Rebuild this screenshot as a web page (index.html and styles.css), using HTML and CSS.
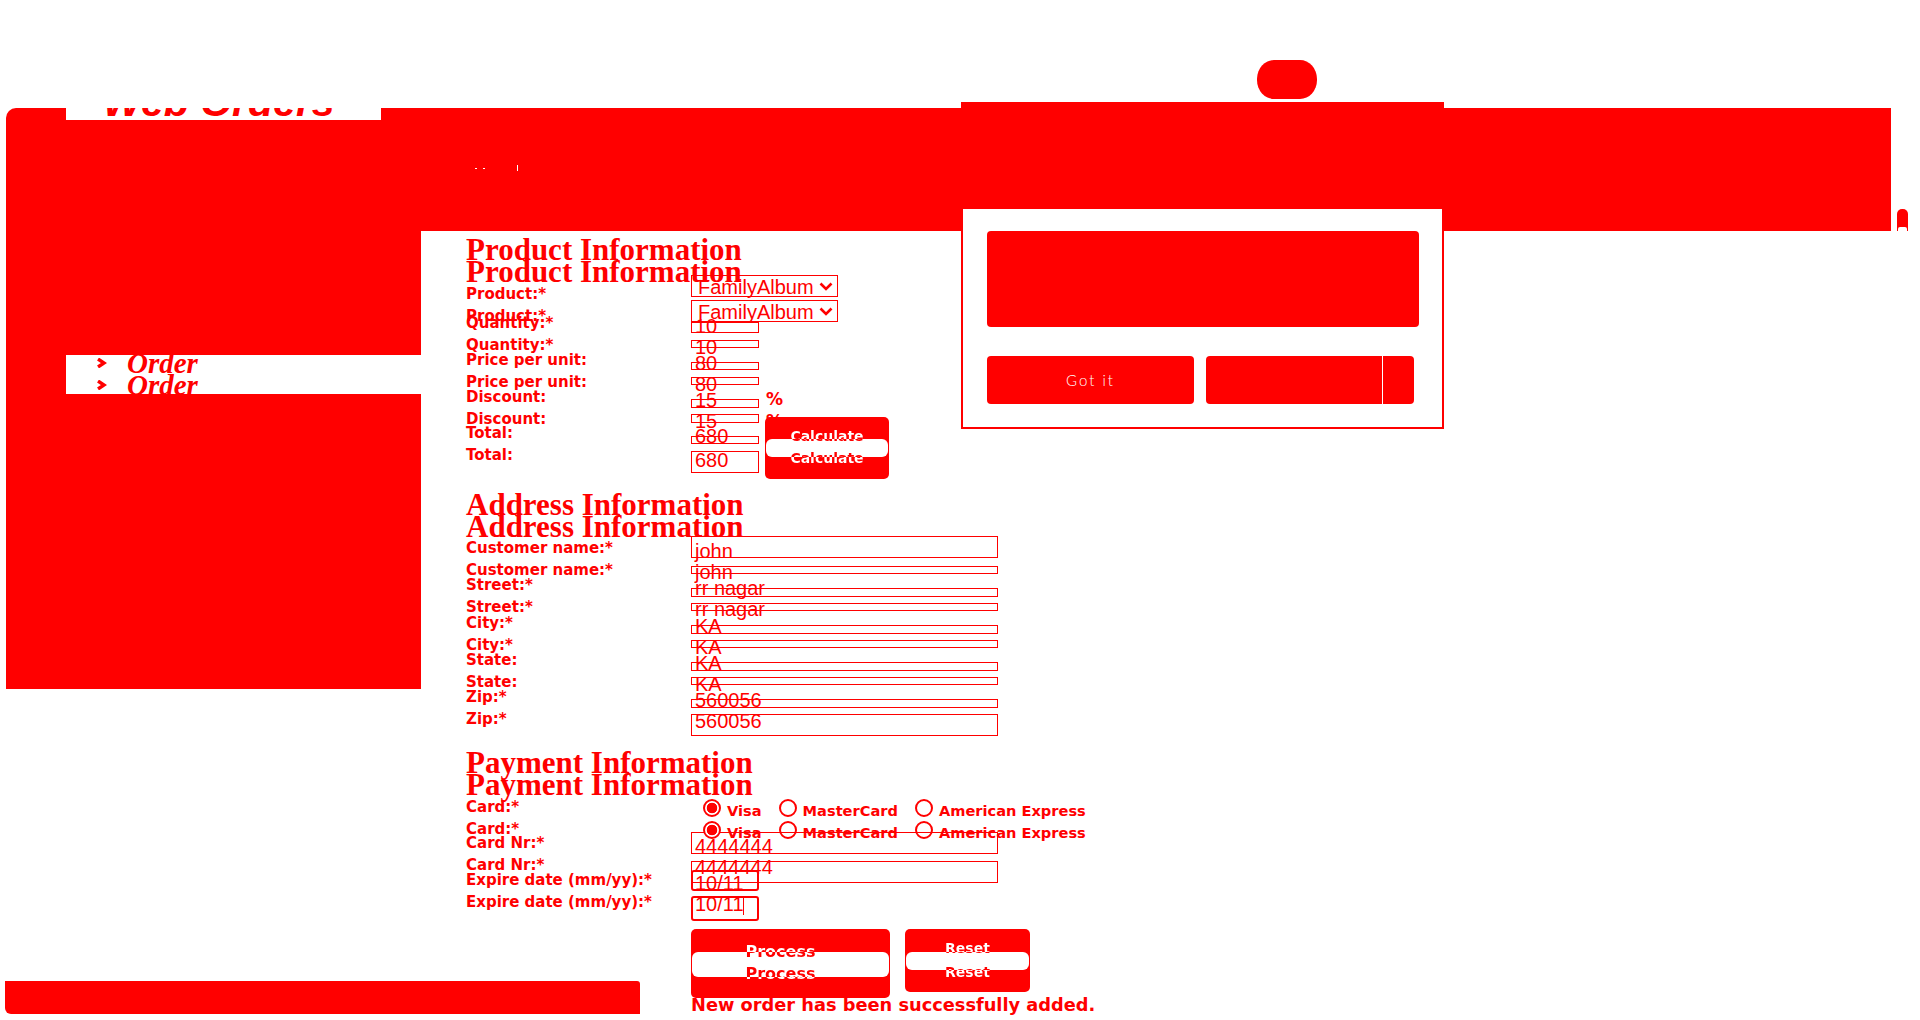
FILE: index.html
```html
<!DOCTYPE html>
<html lang="en">
<head>
<meta charset="utf-8">
<title>Web Orders</title>
<link rel="stylesheet" href="styles.css">
</head>
<body>
<div class="page">
  <div class="oval"></div>

  <div class="bandrow">
    <header class="topband">
      <div class="brand"><span class="brand-text">Web Orders</span></div>
      <div class="marks"><i class="m1"></i><i class="m2"></i><i class="m3"></i></div>
    </header>
    <div class="arch"></div>
  </div>

  <div class="layout">
    <aside class="left">
      <div class="side">
        <nav class="navband">
          <div class="navlines">
            <div class="navline"><svg class="chev" viewBox="0 0 11 10"><polyline points="2,1 8,5 2,9" fill="none" stroke="currentColor" stroke-width="3.4"/></svg>Order</div>
            <div class="navline"><svg class="chev" viewBox="0 0 11 10"><polyline points="2,1 8,5 2,9" fill="none" stroke="currentColor" stroke-width="3.4"/></svg>Order</div>
          </div>
        </nav>
      </div>
      <div class="footbar"></div>
    </aside>

    <main class="content">
      <!-- first copy -->
      <div class="form a">
        <section class="sec sec1">
          <h2>Product Information</h2>
          <div class="rows">
            <div class="row h29"><span class="lbl">Product:*</span><div class="fld"><div class="inp sel f-sel"><span class="box">FamilyAlbum<svg class="caret" viewBox="0 0 14 9"><polyline points="1.5,1.5 7,7 12.5,1.5" fill="none" stroke="currentColor" stroke-width="2.6"/></svg></span></div></div></div>
            <div class="row"><span class="lbl">Quantity:*</span><div class="fld"><div class="inp s f-qty"><span class="box"></span><span class="val">10</span></div></div></div>
            <div class="row"><span class="lbl">Price per unit:</span><div class="fld"><div class="inp s f-price"><span class="box"></span><span class="val">80</span></div></div></div>
            <div class="row h36"><span class="lbl">Discount:</span><div class="fld"><div class="inp s f-disc"><span class="box"></span><span class="val">15</span></div><span class="pct">%</span></div></div>
            <div class="row"><span class="lbl">Total:</span><div class="fld"><div class="inp s f-total"><span class="box"></span><span class="val">680</span></div>
              <div class="ubtn calc"><span class="ov"></span><span class="ut t1">Calculate</span><span class="ut t2">Calculate</span></div></div></div>
          </div>
        </section>
        <section class="sec sec2">
          <h2>Address Information</h2>
          <div class="rows">
            <div class="row"><span class="lbl">Customer name:*</span><div class="fld"><div class="inp w f-cust"><span class="box"></span><span class="val">john</span></div></div></div>
            <div class="row h38"><span class="lbl">Street:*</span><div class="fld"><div class="inp w f-street"><span class="box"></span><span class="val">rr nagar</span></div></div></div>
            <div class="row"><span class="lbl">City:*</span><div class="fld"><div class="inp w f-city"><span class="box"></span><span class="val">KA</span></div></div></div>
            <div class="row"><span class="lbl">State:</span><div class="fld"><div class="inp w f-state"><span class="box"></span><span class="val">KA</span></div></div></div>
            <div class="row"><span class="lbl">Zip:*</span><div class="fld"><div class="inp w f-zip"><span class="box"></span><span class="val">560056</span></div></div></div>
          </div>
        </section>
        <section class="sec sec3">
          <h2>Payment Information</h2>
          <div class="rows">
            <div class="row h36"><span class="lbl">Card:*</span><div class="fld radios">
              <span class="radio"><i class="dot on"></i><span class="rt">Visa</span></span>
              <span class="radio"><i class="dot"></i><span class="rt">MasterCard</span></span>
              <span class="radio"><i class="dot"></i><span class="rt">American Express</span></span></div></div>
            <div class="row"><span class="lbl">Card Nr:*</span><div class="fld"><div class="inp w f-card"><span class="box"></span><span class="val">4444444</span></div></div></div>
            <div class="row h57"><span class="lbl">Expire date (mm/yy):*</span><div class="fld"><div class="inp s f-exp"><span class="box"></span><span class="val">10/11</span><span class="cursor"></span></div></div></div>
          </div>
          <div class="btnrow">
            <div class="ubtn proc"><span class="ov"></span><span class="ut t1">Process</span><span class="ut t2">Process</span></div>
            <div class="ubtn rst"><span class="ov"></span><span class="ut t1">Reset</span><span class="ut t2">Reset</span></div>
          </div>
          <p class="msg">New order has been successfully added.</p>
        </section>
      </div>

      <!-- second copy, 22px lower -->
      <div class="form b">
        <section class="sec sec1">
          <h2>Product Information</h2>
          <div class="rows">
            <div class="row h29"><span class="lbl">Product:*</span><div class="fld"><div class="inp sel f-sel"><span class="box">FamilyAlbum<svg class="caret" viewBox="0 0 14 9"><polyline points="1.5,1.5 7,7 12.5,1.5" fill="none" stroke="currentColor" stroke-width="2.6"/></svg></span></div></div></div>
            <div class="row"><span class="lbl">Quantity:*</span><div class="fld"><div class="inp s f-qty"><span class="box"></span><span class="val">10</span></div></div></div>
            <div class="row"><span class="lbl">Price per unit:</span><div class="fld"><div class="inp s f-price"><span class="box"></span><span class="val">80</span></div></div></div>
            <div class="row h36"><span class="lbl">Discount:</span><div class="fld"><div class="inp s f-disc"><span class="box"></span><span class="val">15</span></div><span class="pct">%</span></div></div>
            <div class="row"><span class="lbl">Total:</span><div class="fld"><div class="inp s f-total"><span class="box"></span><span class="val">680</span></div></div></div>
          </div>
        </section>
        <section class="sec sec2">
          <h2>Address Information</h2>
          <div class="rows">
            <div class="row"><span class="lbl">Customer name:*</span><div class="fld"><div class="inp w f-cust"><span class="box"></span><span class="val">john</span></div></div></div>
            <div class="row h38"><span class="lbl">Street:*</span><div class="fld"><div class="inp w f-street"><span class="box"></span><span class="val">rr nagar</span></div></div></div>
            <div class="row"><span class="lbl">City:*</span><div class="fld"><div class="inp w f-city"><span class="box"></span><span class="val">KA</span></div></div></div>
            <div class="row"><span class="lbl">State:</span><div class="fld"><div class="inp w f-state"><span class="box"></span><span class="val">KA</span></div></div></div>
            <div class="row"><span class="lbl">Zip:*</span><div class="fld"><div class="inp w f-zip"><span class="box"></span><span class="val">560056</span></div></div></div>
          </div>
        </section>
        <section class="sec sec3">
          <h2>Payment Information</h2>
          <div class="rows">
            <div class="row h36"><span class="lbl">Card:*</span><div class="fld radios">
              <span class="radio"><i class="dot on"></i><span class="rt">Visa</span></span>
              <span class="radio"><i class="dot"></i><span class="rt">MasterCard</span></span>
              <span class="radio"><i class="dot"></i><span class="rt">American Express</span></span></div></div>
            <div class="row"><span class="lbl">Card Nr:*</span><div class="fld"><div class="inp w f-card"><span class="box"></span><span class="val">4444444</span></div></div></div>
            <div class="row h57"><span class="lbl">Expire date (mm/yy):*</span><div class="fld"><div class="inp s f-exp"><span class="box"></span><span class="val">10/11</span><span class="cursor"></span></div></div></div>
          </div>
        </section>
      </div>
    </main>
  </div>

  <div class="modal">
    <div class="mhead"></div>
    <div class="mbody">
      <div class="notice"></div>
      <div class="mbtns">
        <div class="mbtn got">Got it</div>
        <div class="mbtn split"><span></span></div>
      </div>
    </div>
  </div>
</div>
</body>
</html>
```

FILE: styles.css
```css
:root { --r: #ff0000; }
* { box-sizing: border-box; }
html, body { margin: 0; background: #fff; }
body { font-family: "DejaVu Sans", sans-serif; color: var(--r); }

.page { position: relative; width: 1920px; height: 1020px; overflow: hidden; padding-top: 108px; }

.oval { position: absolute; left: 1257px; top: 60px; width: 60px; height: 39px; background: var(--r); border-radius: 17px / 19px; }

/* top band */
.bandrow { display: flex; align-items: flex-end; height: 123px; }
.topband { margin-left: 6px; width: 1885px; height: 123px; flex: none; background: var(--r); border-top-left-radius: 10px; display: flex; align-items: flex-start; }
.brand { margin-left: 60px; width: 315px; height: 12px; background: #fff; overflow: hidden; flex: none; }
.brand-text { display: block; margin: -26px 0 0 37px; font: italic bold 41px/41px "Liberation Sans", sans-serif; white-space: nowrap; }
.marks { margin: 57px 0 0 94px; display: flex; align-items: flex-start; }
.marks i { display: block; background: #fff; }
.m1 { width: 2px; height: 1px; margin-top: 3px; }
.m2 { width: 2px; height: 1px; margin: 3px 0 0 6px; }
.m3 { width: 1px; height: 6px; margin-left: 32px; }
.arch { margin-left: 6px; width: 11px; height: 22px; flex: none; background: var(--r); border-radius: 5px 5px 0 0; position: relative; }
.arch::after { content: ""; position: absolute; left: 1px; right: 1px; bottom: 0; height: 4px; background: #fff; border-radius: 2px 2px 0 0; }

/* body layout */
.layout { display: flex; align-items: flex-start; }
.left { width: 421px; flex: none; padding-left: 6px; }
.side { height: 458px; background: var(--r); padding-top: 124px; }
.navband { margin-left: 60px; height: 39px; background: #fff; overflow: hidden; }
.navlines { margin-top: -3px; }
.navline { height: 22px; padding-left: 30px; font: italic bold 29px/22px "Liberation Serif", serif; white-space: nowrap; }
.chev { width: 11px; height: 10px; vertical-align: 5px; margin-right: 20px; }
.footbar { margin: 292px 0 0 -1px; width: 635px; height: 33px; background: var(--r); border-radius: 0 3px 0 6px; }

.content { position: relative; margin-left: 45px; width: 700px; flex: none; }
.form.b { position: absolute; left: 0; top: 22px; width: 100%; }

h2 { margin: 0; font: bold 31px/30px "Liberation Serif", serif; white-space: nowrap; }
.sec1 { padding-top: 4px; }
.rows { margin-top: 21px; }
.sec2 { margin-top: 28px; }
.sec2 .rows { margin-top: 20px; }
.sec3 { margin-top: 22px; }

.row { display: grid; grid-template-columns: 225px 1fr; height: 37px; }
.h29 { height: 29px; }
.h36 { height: 36px; }
.h38 { height: 38px; }
.h57 { height: 57px; }
.lbl { font: bold 15px/17px "DejaVu Sans", sans-serif; white-space: nowrap; }
.fld { display: flex; align-items: flex-start; }

.inp { position: relative; height: 22px; flex: none; }
.s { width: 68px; }
.w { width: 307px; }
.sel { width: 147px; }
.box { position: absolute; left: 0; right: 0; border: 1px solid var(--r); }
.val { position: absolute; left: 4px; top: 1px; font: 20px/20px "Liberation Sans", sans-serif; white-space: nowrap; }
.b .val { top: 0; }
.sel .box { height: 22px; display: flex; align-items: center; justify-content: space-between; padding: 1px 4px 0 6px; font: 20px/20px "Liberation Sans", sans-serif; white-space: nowrap; }
.caret { width: 14px; height: 9px; }

.a .f-sel .box { top: -11px; }
.b .f-sel .box { top: -8px; }
.a .f-qty .box { top: 7px; height: 11px; }
.b .f-qty .box { top: 3px; height: 8px; }
.a .f-price .box { top: 10px; height: 8px; }
.b .f-price .box { top: 3px; height: 8px; }
.a .f-disc .box { top: 10px; height: 9px; }
.b .f-disc .box { top: 3px; height: 9px; }
.a .f-total .box { top: 11px; height: 8px; }
.b .f-total .box { top: 4px; height: 22px; }
.b .f-total .val { top: 3px; }
.a .f-cust .box { top: -4px; height: 22px; }
.b .f-cust .box { top: 4px; height: 8px; }
.a .f-street .box { top: 11px; height: 9px; }
.b .f-street .box { top: 4px; height: 8px; }
.a .f-city .box, .a .f-state .box, .a .f-zip .box { top: 10px; height: 9px; }
.b .f-city .box, .b .f-state .box { top: 3px; height: 8px; }
.b .f-zip .box { top: 3px; height: 22px; }
.a .f-card .box { top: -3px; height: 22px; }
.b .f-card .box { top: 4px; height: 22px; }
.f-exp .box { border-width: 2px; border-radius: 3px; }
.a .f-exp .box { top: -2px; height: 21px; }
.b .f-exp .box { top: 2px; height: 25px; }
.cursor { position: absolute; left: 52px; top: 4px; width: 1px; height: 17px; background: var(--r); }
.a .cursor { display: none; }

.pct { margin: 2px 0 0 7px; font: bold 17px/17px "DejaVu Sans", sans-serif; }

.radios { padding-left: 12px; gap: 17px; }
.radio { display: flex; gap: 6px; align-items: flex-start; }
.dot { display: block; width: 18px; height: 18px; border: 2px solid var(--r); border-radius: 50%; flex: none; }
.dot.on { background: radial-gradient(circle, var(--r) 0 5px, #fff 5.6px); }
.rt { margin-top: 3px; font: bold 14.6px/17px "DejaVu Sans", sans-serif; white-space: nowrap; }

/* merged button pairs */
.ubtn { position: relative; flex: none; background: var(--r); border-radius: 5px; overflow: hidden; }
.ov { position: absolute; left: 1px; right: 1px; background: #fff; border-radius: 6px; }
.ut { position: absolute; left: 0; right: 0; text-align: center; font: bold 14px/14px "DejaVu Sans", sans-serif; white-space: nowrap; color: transparent; -webkit-background-clip: text; background-clip: text; }
.calc { width: 124px; height: 62px; margin: -8px 0 0 6px; }
.calc .ov { top: 22px; height: 18px; }
.calc .t1 { top: 12px; background-image: linear-gradient(#fff 10px, var(--r) 10px); }
.calc .t2 { top: 34px; background-image: linear-gradient(var(--r) 6px, #fff 6px); }

.btnrow { display: flex; gap: 15px; margin-left: 225px; height: 66px; align-items: flex-start; }
.proc { width: 199px; height: 69px; }
.proc .ov { top: 23px; height: 25px; }
.proc .ut { font-size: 16px; line-height: 16px; padding-right: 20px; }
.proc .t1 { top: 15px; background-image: linear-gradient(#fff 8px, var(--r) 8px); }
.proc .t2 { top: 37px; background-image: linear-gradient(var(--r) 11px, #fff 11px); }
.rst { width: 125px; height: 63px; }
.rst .ov { top: 23px; height: 18px; }
.rst .t1 { top: 12px; background-image: linear-gradient(#fff 11px, var(--r) 11px); }
.rst .t2 { top: 36px; background-image: linear-gradient(var(--r) 5px, #fff 5px); }
.msg { margin: 0 0 0 225px; font: bold 17.8px/20px "DejaVu Sans", sans-serif; white-space: nowrap; }

/* dialog */
.modal { position: absolute; left: 961px; top: 102px; width: 483px; }
.mhead { height: 107px; background: var(--r); }
.mbody { height: 220px; border: 2px solid var(--r); border-top: 0; padding: 22px 0 0 24px; background: #fff; }
.notice { width: 432px; height: 96px; background: var(--r); border-radius: 4px; }
.mbtns { display: flex; gap: 12px; margin-top: 29px; }
.mbtn { height: 48px; background: var(--r); border-radius: 4px; }
.got { width: 207px; display: flex; align-items: center; justify-content: center; color: #fff; font: 300 15px/1 Lato, sans-serif; letter-spacing: 2px; }
.split { width: 208px; display: flex; }
.split span { width: 177px; border-right: 1px solid #fff; }
```
